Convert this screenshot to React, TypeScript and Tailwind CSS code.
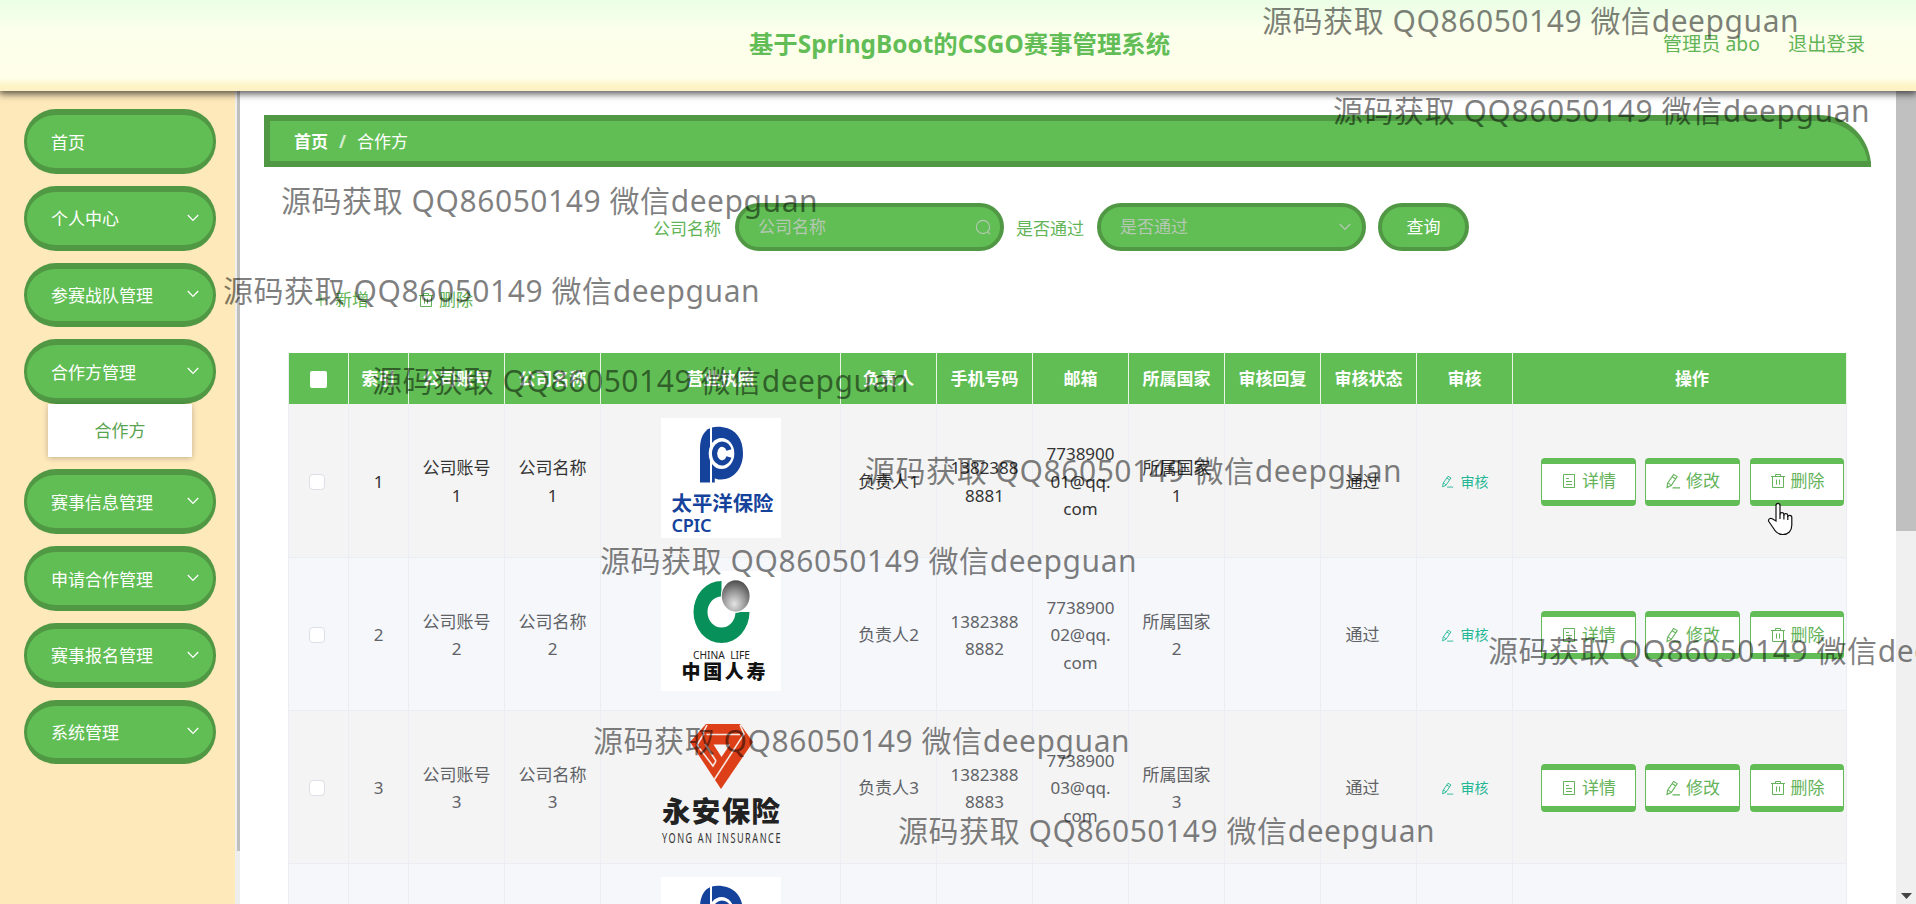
import React from "react";

const menu = [
  { label: "首页" },
  { label: "个人中心", arrow: true },
  { label: "参赛战队管理", arrow: true },
  { label: "合作方管理", arrow: true, child: "合作方" },
  { label: "赛事信息管理", arrow: true },
  { label: "申请合作管理", arrow: true },
  { label: "赛事报名管理", arrow: true },
  { label: "系统管理", arrow: true },
];

const headers = ["公司账号", "公司名称", "营业执照", "负责人", "手机号码", "邮箱", "所属国家", "审核回复", "审核状态", "审核"];
const widths = [60, 60, 96, 96, 240, 96, 96, 96, 96, 96, 96, 96, 334];

const watermarks = [
  { x: 1262, y: -1 },
  { x: 1333, y: 89 },
  { x: 281, y: 179 },
  { x: 223, y: 269 },
  { x: 372, y: 359 },
  { x: 865, y: 449 },
  { x: 600, y: 539 },
  { x: 1488, y: 629 },
  { x: 593, y: 719 },
  { x: 898, y: 809 },
];

function Chevron({ className = "" }: { className?: string }) {
  return (
    <svg width="12" height="8" viewBox="0 0 12 8" fill="none" stroke="currentColor" strokeWidth="1.3" className={className}>
      <path d="M0.8 1 6 6.4 11.2 1" />
    </svg>
  );
}

function EditIcon({ size = 16 }: { size?: number }) {
  return (
    <svg width={size} height={size} viewBox="0 0 16 16" fill="none" stroke="currentColor" strokeWidth="1.1">
      <path d="M8.6 1.5 12.2 3.600 6.200 12.500 2 14.600 2.600 10.200ZM7.200 3.800l3.500 2.200M2.600 10.200c1.600 0 2.600.8 3.600 2.300M7.500 14.900h7.500" />
    </svg>
  );
}

function TrashIcon() {
  return (
    <svg width="16" height="16" viewBox="0 0 16 16" fill="none" stroke="currentColor" strokeWidth="1">
      <path d="M1 3.5h14M5.500 3.500V1.500h5v2M2.500 3.500v11h11v-11M6.500 6.500v5.200M9.500 6.500v5.200" />
    </svg>
  );
}

function DocIcon() {
  return (
    <svg width="16" height="16" viewBox="0 0 16 16" fill="none" stroke="currentColor" strokeWidth="1">
      <path d="M2.500 1.500h11v13h-11ZM5 5.500h3M5 8.500h6M5 11.500h6" />
    </svg>
  );
}

function SearchIcon() {
  return (
    <svg width="17" height="17" viewBox="0 0 17 17" fill="none" stroke="currentColor" strokeWidth="1.1">
      <circle cx="8" cy="8" r="6.6" />
      <path d="m12.400 12.600 2.800 2.800" />
    </svg>
  );
}

function CpicLogo() {
  return (
    <svg width="120" height="120" viewBox="0 0 120 120" className="block bg-white">
      <path d="M39 64.5V30C39 20 43 12.500 49 10.200V64.500Z" fill="#15429b" />
      <path d="M51 64.500V9.400C54 8.700 58 8.700 62 9.200 75 11 82 21 82 35.500S73 62 59 61.500C56.500 61.400 55 60.800 53.800 60.200V64.500Z" fill="#15429b" />
      <ellipse cx="60.500" cy="35.500" rx="12.800" ry="15.500" fill="#fff" />
      <path d="M68 32A7.500 9.300 0 1 0 68 39" fill="none" stroke="#15429b" strokeWidth="5.200" />
      <text x="10.500" y="92.500" fontSize="20.400" fontWeight="700" fill="#15429b" textLength="102">太平洋保险</text>
      <text x="10.500" y="113.500" fontSize="18" fontWeight="600" fill="#15429b" textLength="40">CPIC</text>
    </svg>
  );
}

function ChinaLifeLogo() {
  return (
    <svg width="120" height="120" viewBox="0 0 120 120" className="block bg-white">
      <defs>
        <radialGradient id="ball" cx="0.45" cy="0.75" r="0.75">
          <stop offset="0" stopColor="#e4e4e4" />
          <stop offset="0.5" stopColor="#9b9b9b" />
          <stop offset="1" stopColor="#4c4c4c" />
        </radialGradient>
      </defs>
      <path d="M60.500 10A28 31 0 1 0 88.500 41H74.500A14 15.500 0 1 1 60.500 25.500Z" fill="#08905a" />
      <ellipse cx="74.700" cy="25.300" rx="14.800" ry="16.600" fill="#fff" />
      <ellipse cx="74.700" cy="25" rx="13.900" ry="15.700" fill="url(#ball)" />
      <text x="32" y="88.300" fontSize="10.500" fill="#222" textLength="57" lengthAdjust="spacingAndGlyphs" xmlSpace="preserve">CHINA  LIFE</text>
      <text x="20.500" y="107.500" fontSize="19" fontWeight="900" fill="#111" textLength="84">中国人寿</text>
    </svg>
  );
}

function YongAnLogo() {
  return (
    <svg width="120" height="120" viewBox="0 0 120 120" className="block">
      <path d="M45 0H79L92 18 60 65 29 18Z" fill="#dd4018" />
      <path d="M43 9.500 36 21 52 42 55 37M45.500 10.500H79M46 1 42 9M79 1 83 10 53 56M44 20 55 37" fill="none" stroke="#f6e6e0" strokeWidth="1.600" />
      <path d="M52.500 20.500H69L60.500 33Z" fill="#f4f4f4" />
      <text x="1" y="97.500" fontSize="28.500" fontWeight="900" fill="#222" textLength="118">永安保险</text>
      <text x="1" y="118.800" fontSize="15" fill="#333" textLength="120" lengthAdjust="spacingAndGlyphs" letterSpacing="2.500">YONG AN INSURANCE</text>
    </svg>
  );
}

function Hand() {
  return (
    <svg width="27" height="34" viewBox="0 0 27 34" className="absolute left-[1767px] top-[502px]">
      <path
        d="M9 19V3.500C9 .6 13 .6 13 3.500V12.500c0-2.500 3.700-2.500 3.900 0V13.500c0-2.400 3.700-2.400 3.900 0V15c0-2.200 4-2.200 4 .5V23c0 6-3.500 9.500-9 9.500-5 0-7.500-3-9.500-6.500L1.800 19.500C.8 17.500 3 15.500 5.200 16.800Z"
        fill="#fff"
        stroke="#111"
        strokeWidth="1.200"
      />
      <path d="M13 12v5M16.900 13v4.500M20.800 14v4" stroke="#111" strokeWidth="1.200" />
    </svg>
  );
}

function Row({ n, hover, logo }: { n: number; hover?: boolean; logo: React.ReactNode }) {
  const bg = n % 2 ? "bg-[#f4f4f4]" : "bg-[#f5f7fb]";
  const td = `${n === 1 ? "h-[154px]" : "h-[153px]"} border-r border-b border-[#ecedf2] px-0 pt-[2px] pb-0 align-middle`;
  const btn = "flex h-12 items-center justify-center gap-[5px] rounded border-x border-y-[6px] border-[#63bd57] bg-white pb-px text-[#65b35b]";
  return (
    <tr className={`${bg} ${hover ? "text-[#333]" : "text-[#606266]"}`}>
      <td className={td}>
        <div className="mx-auto h-4 w-4 translate-x-[-2px] rounded-sm border border-[#dcdfe6] bg-white" />
      </td>
      <td className={td}>{n}</td>
      <td className={td}>公司账号<br />{n}</td>
      <td className={td}>公司名称<br />{n}</td>
      <td className={td}><div className="mb-[8px] ml-[60px]">{logo}</div></td>
      <td className={td}>负责人{n}</td>
      <td className={td}>1382388<br />888{n}</td>
      <td className={td}>7738900<br />0{n}@qq.<br />com</td>
      <td className={td}>所属国家<br />{n}</td>
      <td className={td} />
      <td className={`${td} pr-[12px]`}>通过</td>
      <td className={td}>
        <div className="flex items-center justify-center gap-[7px] text-sm text-[#1fb794]"><EditIcon size={13} />审核</div>
      </td>
      <td className={td}>
        <div className="flex justify-end gap-[9px] pr-[2px]">
          <div className={`${btn} w-[95px]`}><DocIcon />详情</div>
          <div className={`${btn} w-[95px]`}><EditIcon />修改</div>
          <div className={`${btn} ml-px w-[94px]`}><TrashIcon />删除</div>
        </div>
      </td>
    </tr>
  );
}

export default function App() {
  return (
    <div className="relative flex h-[904px] w-[1916px] flex-col overflow-hidden bg-white font-['Noto_Sans','Noto_Sans_CJK_SC',sans-serif] text-[17px] leading-[27.5px]">
      <header className="relative z-10 flex h-[91px] shrink-0 items-center bg-[linear-gradient(#ecfee6_0,#f3ffe9_18px,#fbffeb_28px,#fefee9_78px,#fdf4c6_86px,#fdf0c4_91px)] shadow-[0_2px_7px_1px_rgba(0,0,0,0.65)]">
        <h1 className="w-full pb-[4px] pl-[3px] text-center text-[24.4px] font-bold text-[#62bd56]">基于SpringBoot的CSGO赛事管理系统</h1>
        <div className="absolute right-[51px] top-[30px] flex gap-7 text-[19.3px] text-[#62b457]">
          <span>管理员 abo</span>
          <span>退出登录</span>
        </div>
      </header>
      <div className="flex min-h-0 flex-1">
        <aside className="flex w-[235px] shrink-0 flex-col bg-[#fee9bb] pt-[18px] pl-6">
          {menu.map((m) => (
            <div key={m.label} className="mb-3 flex w-48 flex-col items-center">
              <div className="flex h-[64.8px] w-48 items-center justify-between rounded-[32px] border-x-[3px] border-y-[6px] border-[#519845] bg-[#61be54] pr-[14px] pl-6 text-white">
                <span className="pt-[2px]">{m.label}</span>
                {m.arrow && <Chevron className="mb-px" />}
              </div>
              {m.child && (
                <div className="flex h-[53px] w-36 items-center justify-center bg-white text-[#5aa450] shadow-[0_1px_6px_rgba(0,0,0,0.25)]">{m.child}</div>
              )}
            </div>
          ))}
        </aside>
        <div className="w-[5px] shrink-0 bg-[#eeeeee] pl-[2px]"><div className="h-[760px] bg-[#bfbfbf]" /></div>
        <main className="flex min-w-0 flex-1 flex-col pt-6 pl-6">
          <div className="flex h-[52px] w-[1607px] shrink-0 items-center rounded-tr-[52px] border-y-[6px] border-r-[3px] border-l-[6px] border-[#519845] bg-[#61be54] pt-[2px] pl-6 text-white">
            <b>首页</b>
            <span className="mx-[11px] font-bold text-[#d4ecd0]">/</span>
            <span>合作方</span>
          </div>
          <div className="mt-9 flex h-12 shrink-0 items-center pl-[389px] text-[#62b457]">
            <span className="w-[82px] pt-[3px]">公司名称</span>
            <div className="flex h-12 w-[269px] items-center justify-between rounded-[24px] border-4 border-[#519845] bg-[#61be54] pr-[8px] pl-[19px] text-[#b5c8b3]">
              <span>公司名称</span>
              <SearchIcon />
            </div>
            <span className="ml-3 w-[81px] pt-[3px]">是否通过</span>
            <div className="flex h-12 w-[269px] items-center justify-between rounded-[24px] border-4 border-[#519845] bg-[#61be54] pr-[11px] pl-[19px] text-[#b5c8b3]">
              <span>是否通过</span>
              <Chevron />
            </div>
            <div className="ml-3 flex h-12 w-[91px] items-center justify-center rounded-[24px] border-4 border-[#519845] bg-[#61be54] text-white">查询</div>
          </div>
          <div className="mt-[35px] mb-px flex h-[27px] shrink-0 items-center gap-[49px] pl-[49px] text-[#62b457]">
            <span className="flex items-center gap-[6px]">
              <svg width="16" height="16" viewBox="0 0 16 16" stroke="currentColor" fill="none"><path d="M8 2v12M2 8h12" /></svg>
              新增
            </span>
            <span className="flex items-center gap-[5px]"><TrashIcon />删除</span>
          </div>
          <table className="mt-[39px] ml-6 w-[1558px] table-fixed border-separate border-spacing-0 border-l border-[#ecedf2] text-center">
            <colgroup>{widths.map((w, i) => <col key={i} style={{ width: w }} />)}</colgroup>
            <thead>
              <tr className="bg-[#61be54] text-white">
                <th className="h-[51px] border-r border-[#eaf5e8] p-0 pt-[2px]"><div className="mx-auto h-[17px] w-[17px] rounded-[2px] bg-white" /></th>
                <th className="border-r border-[#eaf5e8] p-0 pt-px">索引</th>
                {headers.map((h) => <th key={h} className="border-r border-[#eaf5e8] p-0 pt-px font-bold">{h}</th>)}
                <th className="border-r border-[#eaf5e8] p-0 pt-px pl-[25px] font-bold">操作</th>
              </tr>
            </thead>
            <tbody>
              <Row n={1} hover logo={<CpicLogo />} />
              <Row n={2} logo={<ChinaLifeLogo />} />
              <Row n={3} logo={<YongAnLogo />} />
              <Row n={4} logo={<CpicLogo />} />
            </tbody>
          </table>
        </main>
        <div className="flex w-5 shrink-0 flex-col justify-between bg-[#f0f0f0]">
          <div className="h-[440px] bg-[#c0c0c0]" />
          <svg width="20" height="16" viewBox="0 0 20 16"><path d="M5 5h11l-5.500 6Z" fill="#444" /></svg>
        </div>
      </div>
      <Hand />
      {watermarks.map((w) => (
        <div key={w.y} style={{ left: w.x, top: w.y }} className="pointer-events-none absolute z-20 text-[30px] leading-[44px] font-normal tracking-[0.55px] whitespace-nowrap text-black/50">
          源码获取 QQ86050149 微信deepguan
        </div>
      ))}
    </div>
  );
}
